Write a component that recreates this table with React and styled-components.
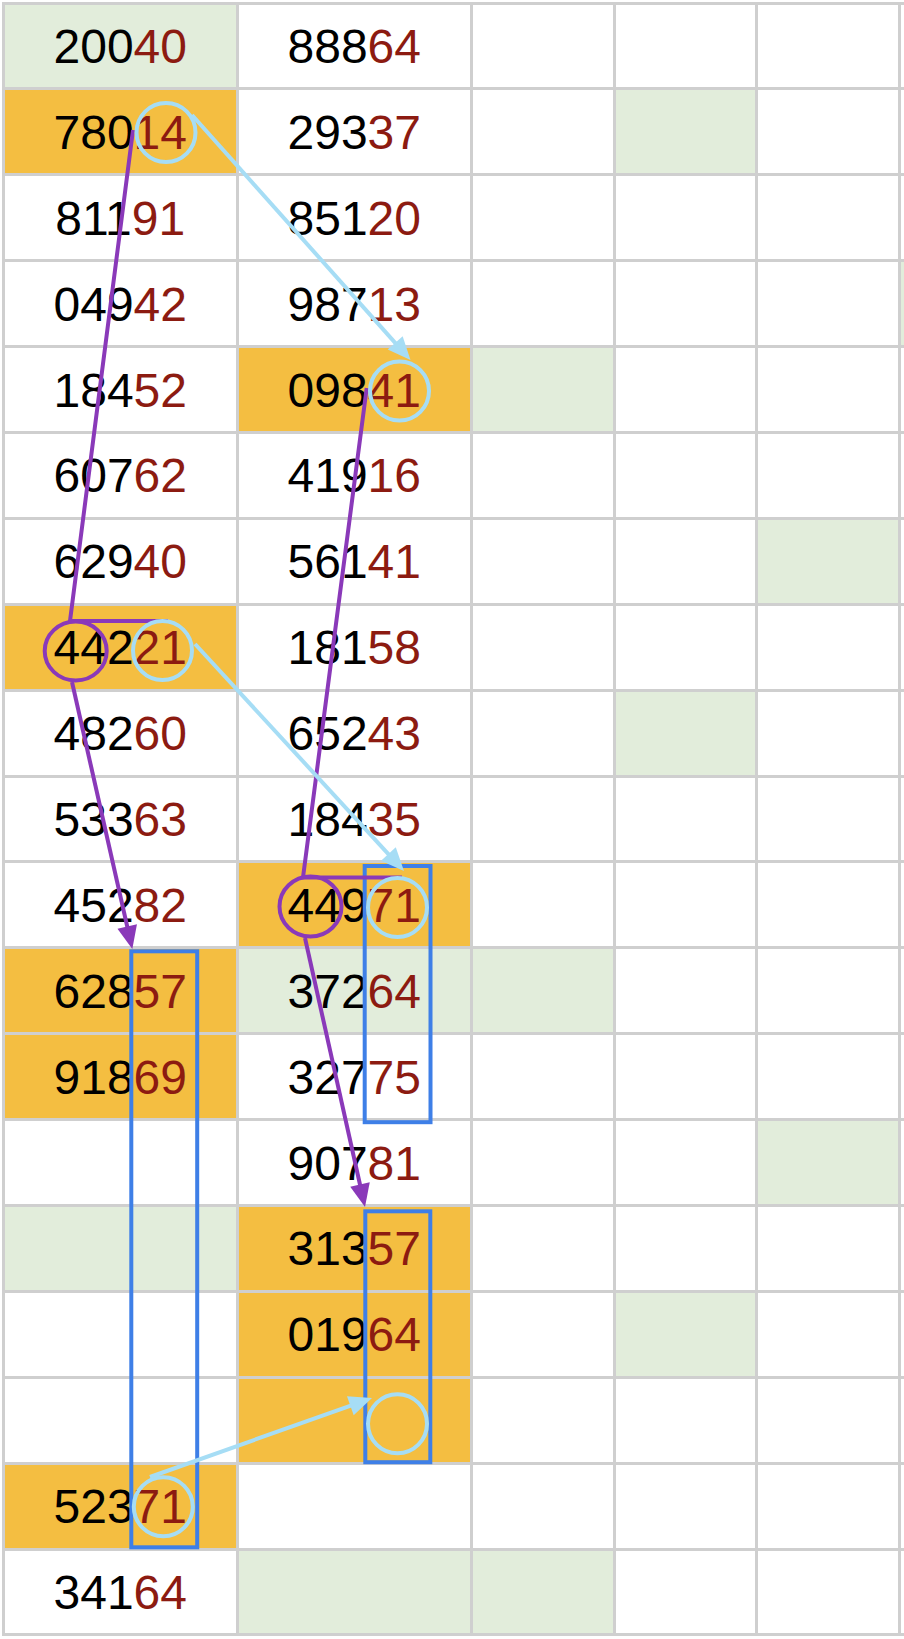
import React from "react";
import styled, { createGlobalStyle } from "styled-components";

const Global = createGlobalStyle`
  html, body { margin: 0; padding: 0; background: #fff; }
  body { font-family: "Liberation Sans", Arial, Helvetica, sans-serif; }
`;

const Page = styled.div`
  position: relative;
  width: 904px;
  height: 1639px;
  overflow: hidden;
  background: #fff;
`;

const Sheet = styled.div`
  margin: 1.5px 0 0 1.5px;
  display: grid;
  grid-template-columns: 231.5px 230.5px 140px 139px 140.5px 1fr;
  grid-auto-rows: 82.9px;
  gap: 3px;
  padding: 3px 0 3px 3px;
  background: #cfcfcf;
  width: 902.5px;
  box-sizing: border-box;
`;

const BG = { g: "#e2eddb", o: "#f4be41" };

const Cell = styled.div`
  background: ${(p) => (p.$bg ? BG[p.$bg] : "#fff")};
  display: flex;
  align-items: center;
  justify-content: center;
  font-size: 48px;
  line-height: 1;
  color: #000;
  padding-top: 2px;
  box-sizing: border-box;
`;

const Tail = styled.span`
  color: #8c1b11;
`;

const Overlay = styled.svg`
  position: absolute;
  left: 0;
  top: 0;
  pointer-events: none;
`;

const rows = [
  [{ t: "20040", bg: "g" }, { t: "88864" }],
  [{ t: "78014", bg: "o" }, { t: "29337" }, {}, { bg: "g" }],
  [{ t: "81191" }, { t: "85120" }],
  [{ t: "04942" }, { t: "98713" }, {}, {}, {}, { bg: "g" }],
  [{ t: "18452" }, { t: "09841", bg: "o" }, { bg: "g" }],
  [{ t: "60762" }, { t: "41916" }],
  [{ t: "62940" }, { t: "56141" }, {}, {}, { bg: "g" }],
  [{ t: "44221", bg: "o" }, { t: "18158" }],
  [{ t: "48260" }, { t: "65243" }, {}, { bg: "g" }],
  [{ t: "53363" }, { t: "18435" }],
  [{ t: "45282" }, { t: "44971", bg: "o" }],
  [{ t: "62857", bg: "o" }, { t: "37264", bg: "g" }, { bg: "g" }],
  [{ t: "91869", bg: "o" }, { t: "32775" }],
  [{}, { t: "90781" }, {}, {}, { bg: "g" }],
  [{ bg: "g" }, { t: "31357", bg: "o" }],
  [{}, { t: "01964", bg: "o" }, {}, { bg: "g" }],
  [{}, { bg: "o" }],
  [{ t: "52371", bg: "o" }, {}],
  [{ t: "34164" }, { bg: "g" }, { bg: "g" }],
];

const LB = "#a6ddf5";
const PU = "#8a39b9";
const BL = "#3e7fe7";

function Arrow({ from, to, color, w = 4, len = 23, half = 10 }) {
  const dx = to[0] - from[0];
  const dy = to[1] - from[1];
  const d = Math.hypot(dx, dy);
  const ux = dx / d;
  const uy = dy / d;
  const bx = to[0] - ux * len;
  const by = to[1] - uy * len;
  const px = -uy;
  const py = ux;
  const pts = `${to[0]},${to[1]} ${bx + px * half},${by + py * half} ${bx - px * half},${by - py * half}`;
  return (
    <g>
      <line x1={from[0]} y1={from[1]} x2={bx + ux * 2} y2={by + uy * 2} stroke={color} strokeWidth={w} />
      <polygon points={pts} fill={color} />
    </g>
  );
}

function Marks() {
  const lbCircles = [
    [166, 132.5],
    [399.5, 391],
    [162.5, 650.5],
    [397.5, 907.5],
    [397.5, 1423.8],
    [163.3, 1506.7],
  ];
  return (
    <Overlay width="904" height="1639" viewBox="0 0 904 1639">
      <g fill="none" stroke={BL} strokeWidth="4">
        <rect x="131.3" y="951.3" width="65.9" height="596" />
        <rect x="364.7" y="866" width="65.8" height="256.2" />
        <rect x="365.3" y="1211.3" width="65" height="250.9" />
      </g>
      <g fill="none" stroke={PU} strokeWidth="4" strokeLinejoin="miter">
        <polyline points="133,130 70,621 168,621" />
        <polyline points="366.7,388 303,877.5 402,877.5" />
        <ellipse cx="75.7" cy="651" rx="31" ry="29.5" />
        <ellipse cx="310.5" cy="906.5" rx="31" ry="30" />
      </g>
      <Arrow from={[72, 682]} to={[132.3, 949]} color={PU} />
      <Arrow from={[305, 938]} to={[365, 1207]} color={PU} />
      <g fill="none" stroke={LB} strokeWidth="4">
        {lbCircles.map(([cx, cy], i) => (
          <circle key={i} cx={cx} cy={cy} r="29.5" />
        ))}
      </g>
      <Arrow from={[192, 115]} to={[410.5, 360]} color={LB} />
      <Arrow from={[195, 644]} to={[404, 871]} color={LB} />
      <Arrow from={[150, 1477]} to={[372, 1398]} color={LB} />
    </Overlay>
  );
}

export default function App() {
  return (
    <Page>
      <Global />
      <Sheet>
        {rows.map((r, ri) =>
          Array.from({ length: 6 }).map((_, ci) => {
            const c = r[ci] || {};
            return (
              <Cell key={`${ri}-${ci}`} $bg={c.bg}>
                {c.t ? (
                  <>
                    {c.t.slice(0, 3)}
                    <Tail>{c.t.slice(3)}</Tail>
                  </>
                ) : null}
              </Cell>
            );
          })
        )}
      </Sheet>
      <Marks />
    </Page>
  );
}
